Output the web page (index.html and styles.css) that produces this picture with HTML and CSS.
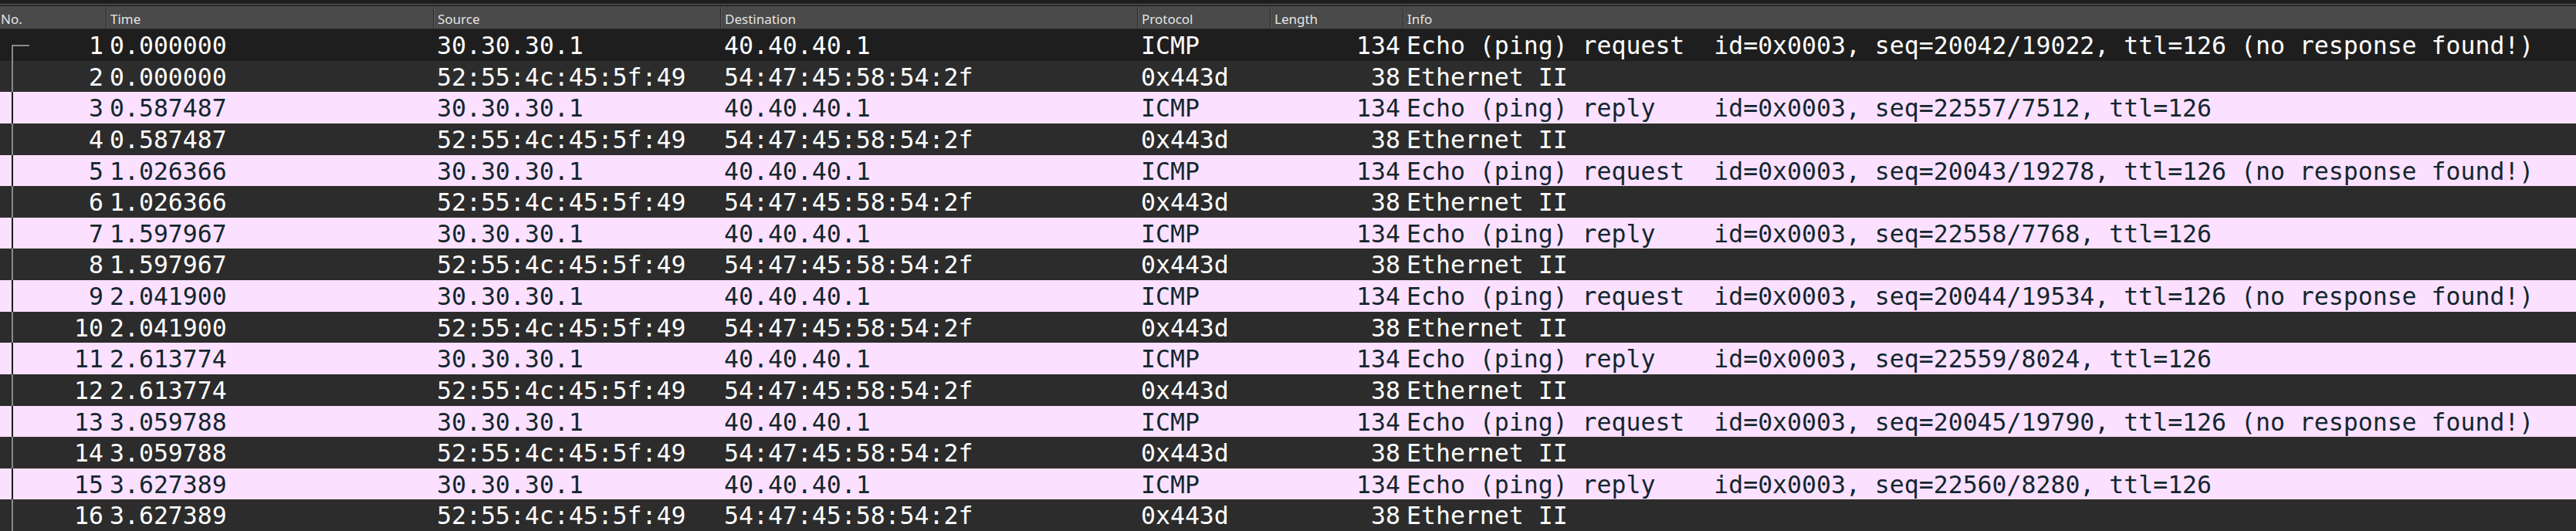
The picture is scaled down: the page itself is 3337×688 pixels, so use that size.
FILE: index.html
```html
<!DOCTYPE html>
<html>
<head>
<meta charset="utf-8">
<link rel="stylesheet" href="styles.css">
</head>
<body>
<div class="pane">
  <div class="topband"></div>
  <div class="row head">
    <div class="hc">No.</div>
    <div class="hc">Time</div>
    <div class="hc">Source</div>
    <div class="hc">Destination</div>
    <div class="hc">Protocol</div>
    <div class="hc">Length</div>
    <div class="hc">Info</div>
  </div>
  <div class="list">
    <div class="row pkt base first"><div class="c no">1</div><div class="c">0.000000</div><div class="c">30.30.30.1</div><div class="c">40.40.40.1</div><div class="c">ICMP</div><div class="c num">134</div><div class="c">Echo (ping) request  id=0x0003, seq=20042/19022, ttl=126 (no response found!)</div></div>
    <div class="row pkt alt"><div class="c no">2</div><div class="c">0.000000</div><div class="c">52:55:4c:45:5f:49</div><div class="c">54:47:45:58:54:2f</div><div class="c">0x443d</div><div class="c num">38</div><div class="c">Ethernet II</div></div>
    <div class="row pkt icmp"><div class="c no">3</div><div class="c">0.587487</div><div class="c">30.30.30.1</div><div class="c">40.40.40.1</div><div class="c">ICMP</div><div class="c num">134</div><div class="c">Echo (ping) reply    id=0x0003, seq=22557/7512, ttl=126</div></div>
    <div class="row pkt alt"><div class="c no">4</div><div class="c">0.587487</div><div class="c">52:55:4c:45:5f:49</div><div class="c">54:47:45:58:54:2f</div><div class="c">0x443d</div><div class="c num">38</div><div class="c">Ethernet II</div></div>
    <div class="row pkt icmp"><div class="c no">5</div><div class="c">1.026366</div><div class="c">30.30.30.1</div><div class="c">40.40.40.1</div><div class="c">ICMP</div><div class="c num">134</div><div class="c">Echo (ping) request  id=0x0003, seq=20043/19278, ttl=126 (no response found!)</div></div>
    <div class="row pkt alt"><div class="c no">6</div><div class="c">1.026366</div><div class="c">52:55:4c:45:5f:49</div><div class="c">54:47:45:58:54:2f</div><div class="c">0x443d</div><div class="c num">38</div><div class="c">Ethernet II</div></div>
    <div class="row pkt icmp"><div class="c no">7</div><div class="c">1.597967</div><div class="c">30.30.30.1</div><div class="c">40.40.40.1</div><div class="c">ICMP</div><div class="c num">134</div><div class="c">Echo (ping) reply    id=0x0003, seq=22558/7768, ttl=126</div></div>
    <div class="row pkt alt"><div class="c no">8</div><div class="c">1.597967</div><div class="c">52:55:4c:45:5f:49</div><div class="c">54:47:45:58:54:2f</div><div class="c">0x443d</div><div class="c num">38</div><div class="c">Ethernet II</div></div>
    <div class="row pkt icmp"><div class="c no">9</div><div class="c">2.041900</div><div class="c">30.30.30.1</div><div class="c">40.40.40.1</div><div class="c">ICMP</div><div class="c num">134</div><div class="c">Echo (ping) request  id=0x0003, seq=20044/19534, ttl=126 (no response found!)</div></div>
    <div class="row pkt alt"><div class="c no">10</div><div class="c">2.041900</div><div class="c">52:55:4c:45:5f:49</div><div class="c">54:47:45:58:54:2f</div><div class="c">0x443d</div><div class="c num">38</div><div class="c">Ethernet II</div></div>
    <div class="row pkt icmp"><div class="c no">11</div><div class="c">2.613774</div><div class="c">30.30.30.1</div><div class="c">40.40.40.1</div><div class="c">ICMP</div><div class="c num">134</div><div class="c">Echo (ping) reply    id=0x0003, seq=22559/8024, ttl=126</div></div>
    <div class="row pkt alt"><div class="c no">12</div><div class="c">2.613774</div><div class="c">52:55:4c:45:5f:49</div><div class="c">54:47:45:58:54:2f</div><div class="c">0x443d</div><div class="c num">38</div><div class="c">Ethernet II</div></div>
    <div class="row pkt icmp"><div class="c no">13</div><div class="c">3.059788</div><div class="c">30.30.30.1</div><div class="c">40.40.40.1</div><div class="c">ICMP</div><div class="c num">134</div><div class="c">Echo (ping) request  id=0x0003, seq=20045/19790, ttl=126 (no response found!)</div></div>
    <div class="row pkt alt"><div class="c no">14</div><div class="c">3.059788</div><div class="c">52:55:4c:45:5f:49</div><div class="c">54:47:45:58:54:2f</div><div class="c">0x443d</div><div class="c num">38</div><div class="c">Ethernet II</div></div>
    <div class="row pkt icmp"><div class="c no">15</div><div class="c">3.627389</div><div class="c">30.30.30.1</div><div class="c">40.40.40.1</div><div class="c">ICMP</div><div class="c num">134</div><div class="c">Echo (ping) reply    id=0x0003, seq=22560/8280, ttl=126</div></div>
    <div class="row pkt alt"><div class="c no">16</div><div class="c">3.627389</div><div class="c">52:55:4c:45:5f:49</div><div class="c">54:47:45:58:54:2f</div><div class="c">0x443d</div><div class="c num">38</div><div class="c">Ethernet II</div></div>
  </div>
</div>
</body>
</html>
```
FILE: styles.css
```css
html, body {
  margin: 0;
  padding: 0;
  background: #1e1e1e;
  overflow: hidden;
}
.pane {
  width: 3337px;
  height: 688px;
  display: flex;
  flex-direction: column;
}
.topband {
  height: 5px;
  background: #1e1e1e;
  border-bottom: 1px solid #5e5e5e;
  box-shadow: 0 2px 0 #262626;
  margin-bottom: 2px;
}
.row {
  display: grid;
  grid-template-columns: 137px 424px 372px 540px 172px 172px 1fr;
}
.head {
  height: 29px;
  background: #4a4a4a;
  border-bottom: 1px solid #2a2a2a;
  font-family: "Noto Sans", "Open Sans", sans-serif;
  font-size: 17px;
  color: #e4e4e4;
}
.hc {
  padding: 5px 0 0 5px;
  line-height: 24px;
  white-space: nowrap;
  overflow: hidden;
  border-left: 1px solid #2e2e2e;
  box-shadow: inset 1px 0 0 #5a5a5a;
}
.hc:first-child {
  border-left: none;
  box-shadow: none;
  padding-left: 1px;
}
.list {
  display: flex;
  flex-direction: column;
}
.pkt {
  height: 40.625px;
  font-family: "DejaVu Sans Mono", monospace;
  font-size: 31.5px;
  line-height: 40.625px;
  white-space: pre;
  --line: #8a8a8a;
}
.c {
  padding: 1px 3px 0 5px;
  overflow: hidden;
  white-space: pre;
}
.c.num, .c.no {
  text-align: right;
}
.c.no {
  padding-right: 3px;
  background: linear-gradient(var(--line), var(--line)) 15px 0 / 2px 100% no-repeat;
}
.first .c.no {
  background:
    linear-gradient(var(--line), var(--line)) 15px 20px / 2px 100% no-repeat,
    linear-gradient(var(--line), var(--line)) 15px 20px / 23px 2px no-repeat;
}
.base {
  background: #1e1e1e;
  color: #ffffff;
}
.alt {
  background: #2c2c2c;
  color: #ffffff;
}
.icmp {
  background: #fce0ff;
  color: #12272e;
  --line: #1c1c1c;
}
```
